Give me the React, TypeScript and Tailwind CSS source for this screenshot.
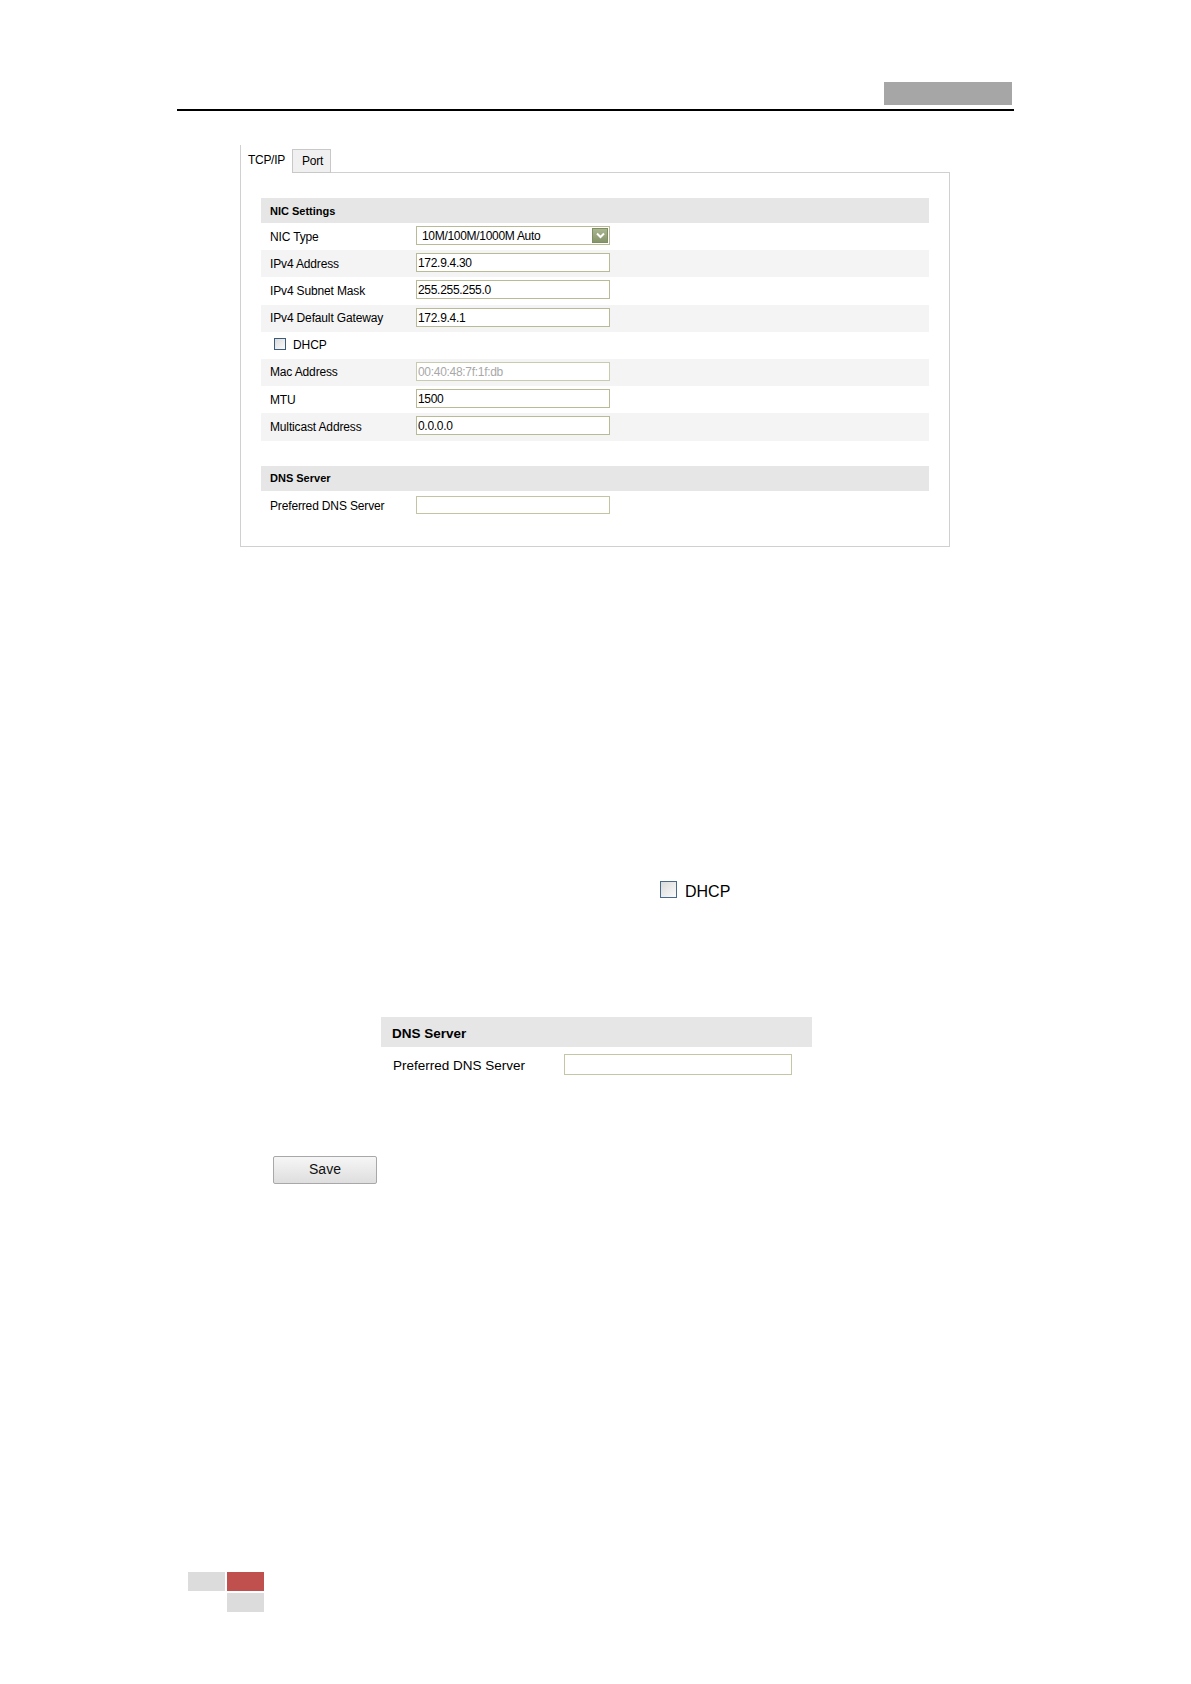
type Row = {
  label?: string
  value?: string
  kind?: "select" | "input" | "dhcp"
  disabled?: boolean
}

const nicRows: Row[] = [
  { label: "NIC Type", value: "10M/100M/1000M Auto", kind: "select" },
  { label: "IPv4 Address", value: "172.9.4.30", kind: "input" },
  { label: "IPv4 Subnet Mask", value: "255.255.255.0", kind: "input" },
  { label: "IPv4 Default Gateway", value: "172.9.4.1", kind: "input" },
  { kind: "dhcp" },
  { label: "Mac Address", value: "00:40:48:7f:1f:db", kind: "input", disabled: true },
  { label: "MTU", value: "1500", kind: "input" },
  { label: "Multicast Address", value: "0.0.0.0", kind: "input" },
]

function Checkbox({ big = false }: { big?: boolean }) {
  return (
    <span
      className={
        big
          ? "block w-[17px] h-[17px] border border-[#48698c] bg-gradient-to-br from-[#dadada] to-[#fbfbfb]"
          : "block w-[12px] h-[12px] border border-[#3d5c7c] bg-gradient-to-br from-[#dcdcdc] to-[#fafafa]"
      }
    />
  )
}

function TextBox({ value, disabled }: { value?: string; disabled?: boolean }) {
  return (
    <div
      className={
        "w-[194px] h-[19px] border bg-white pl-[1px] text-[12px] leading-[19px] tracking-[-0.3px] " +
        (disabled ? "border-[#c9cbb0] text-[#a8a8a8]" : "border-[#b9bb96] text-black")
      }
    >
      {value}
    </div>
  )
}

function SelectBox({ value }: { value?: string }) {
  return (
    <div className="w-[194px] h-[19px] border border-[#b9bb96] bg-white flex items-center justify-between">
      <span className="pl-[5px] pt-[1px] text-[12px] leading-[17px] tracking-[-0.3px]">{value}</span>
      <span className="w-[16px] h-[15px] mr-[1px] border border-[#7f8d63] bg-gradient-to-b from-[#a9b590] to-[#87956b] flex items-center justify-center">
        <svg width="9" height="7" viewBox="0 0 9 7">
          <path d="M1 1.5 L4.5 5 L8 1.5" stroke="#ffffff" strokeWidth="2" fill="none" />
        </svg>
      </span>
    </div>
  )
}

function FormRow({ row, shaded }: { row: Row; shaded: boolean }) {
  if (row.kind === "dhcp") {
    return (
      <div className="h-[27.2px] flex items-start pl-[13px] pt-[6.5px] gap-[7px]">
        <Checkbox />
        <span className="text-[12px] leading-[12px] tracking-[-0.1px] mt-[1px]">DHCP</span>
      </div>
    )
  }
  return (
    <div className={"h-[27.2px] flex items-start pt-[3px] " + (shaded ? "bg-[#f4f4f4]" : "")}>
      <div className="w-[155px] pl-[9px] pt-[2px] h-[19px] flex items-center text-[12px] tracking-[-0.15px]">
        {row.label}
      </div>
      {row.kind === "select" ? <SelectBox value={row.value} /> : <TextBox value={row.value} disabled={row.disabled} />}
    </div>
  )
}

export default function App() {
  return (
    <div className="w-[1191px] h-[1684px] bg-white text-black font-['Liberation_Sans',Arial,sans-serif] flex flex-col">
      {/* page header */}
      <div className="pt-[82px] pl-[177px]">
        <div className="w-[837px]">
          <div className="flex justify-end">
            <div className="w-[128px] h-[23px] mr-[2px] bg-[#a6a6a6]" />
          </div>
          <div className="mt-[4px] h-[2px] bg-black" />
        </div>
      </div>

      {/* tcp/ip panel */}
      <div className="mt-[34px] ml-[240px] w-[710px]">
        <div className="flex h-[28px]">
          <div className="w-[52px] border-l border-[#d0d0d0] pl-[7px] pt-[8px] text-[12px] leading-[14px] tracking-[-0.3px]">
            TCP/IP
          </div>
          <div className="mt-[4px] h-[24px] w-[39px] border border-[#c8c8c8] bg-[#f0f0f0] pl-[9px] pt-[4px] text-[12px] leading-[14px] tracking-[-0.2px]">
            Port
          </div>
          <div className="flex-1 border-b border-[#d0d0d0]" />
        </div>
        <div className="border-l border-r border-b border-[#d0d0d0] px-[20px] pt-[25px] pb-[28px]">
          <div className="h-[25px] bg-[#e6e6e6] pl-[9px] pt-[1px] flex items-center text-[11px] font-bold">NIC Settings</div>
          {nicRows.map((row, i) => (
            <FormRow key={i} row={row} shaded={i % 2 === 1} />
          ))}
          <div className="mt-[25px] h-[25px] bg-[#e6e6e6] pl-[9px] pt-[1px] flex items-center text-[11px] font-bold">
            DNS Server
          </div>
          <div className="h-[27.2px] flex items-start pt-[5px]">
            <div className="w-[155px] pl-[9px] pt-[2px] h-[18px] flex items-center text-[12px] tracking-[-0.15px]">
              Preferred DNS Server
            </div>
            <div className="w-[194px] h-[18px] border border-[#c2c4a4] bg-white" />
          </div>
        </div>
      </div>

      {/* enlarged DHCP */}
      <div className="mt-[334px] ml-[660px] h-[18px] flex items-center gap-[8px]">
        <Checkbox big />
        <span className="text-[16px] leading-[18px] mt-[5px]">DHCP</span>
      </div>

      {/* enlarged DNS server */}
      <div className="mt-[118px] ml-[381px] w-[431px]">
        <div className="h-[30px] bg-[#e6e6e6] pl-[11px] pt-[4px] flex items-center text-[13.5px] font-bold">DNS Server</div>
        <div className="mt-[7px] h-[21px] flex items-center">
          <div className="w-[183px] pl-[12px] pt-[2px] text-[13.5px] leading-[19px]">Preferred DNS Server</div>
          <div className="w-[228px] h-[21px] border border-[#c4c6a6] bg-white" />
        </div>
      </div>

      {/* save */}
      <div className="mt-[81px] ml-[273px]">
        <button className="w-[104px] h-[28px] border border-[#a8a8a8] rounded-[2px] bg-gradient-to-b from-[#f6f6f6] to-[#dedede] text-[14px] text-[#111]">
          Save
        </button>
      </div>

      {/* page footer */}
      <div className="mt-[388px] ml-[188px] grid grid-cols-[37px_37px] gap-x-[2px] gap-y-[2px]">
        <div className="h-[19px] bg-[#dcdcdc]" />
        <div className="h-[19px] bg-[#c0504d]" />
        <div />
        <div className="h-[19px] bg-[#dcdcdc]" />
      </div>
    </div>
  )
}
